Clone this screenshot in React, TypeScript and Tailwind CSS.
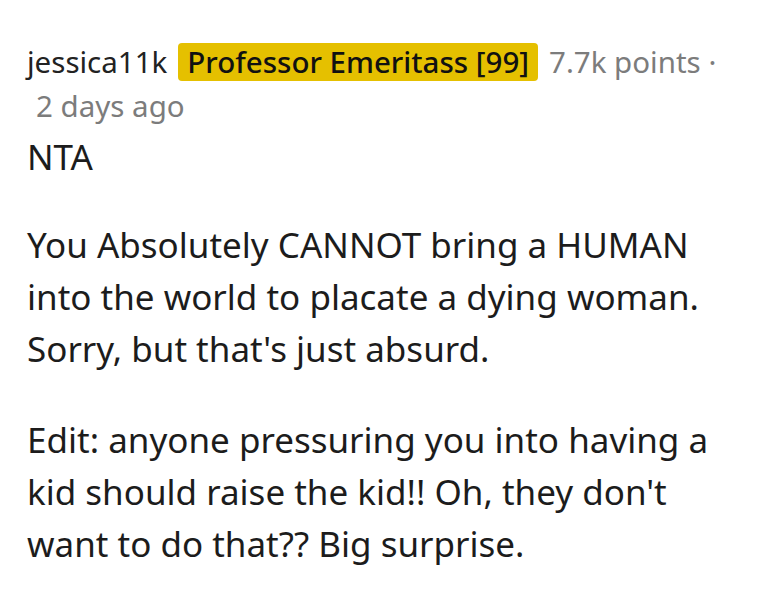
export default function App() {
  return (
    <div className="w-[760px] h-[591px] bg-white overflow-hidden" style={{ fontFamily: '"Noto Sans", sans-serif' }}>
      <div className="pl-[27px] pt-[40px]">
        <div className="flex flex-wrap items-center text-[29.5px] leading-[44px]">
          <span className="text-[#222]">jessica11k</span>
          <span className="ml-[11px] bg-[#e5c000] text-[#111] font-medium rounded-[4px] px-[9px] leading-[38px]">Professor Emeritass [99]</span>
          <span className="ml-[11px] text-[#7c7c7c]">7.7k points ·</span>
          <span className="ml-[9px] text-[#7c7c7c] w-full">2 days ago</span>
        </div>
        <div className="text-[35px] leading-[52px] text-[#1c1c1c] mt-[3px]">
          <p>NTA</p>
          <p className="mt-[36px]">You Absolutely CANNOT bring a HUMAN<br />into the world to placate a dying woman.<br />Sorry, but that's just absurd.</p>
          <p className="mt-[39px]">Edit: anyone pressuring you into having a<br />kid should raise the kid!! Oh, they don't<br />want to do that?? Big surprise.</p>
        </div>
      </div>
    </div>
  );
}
